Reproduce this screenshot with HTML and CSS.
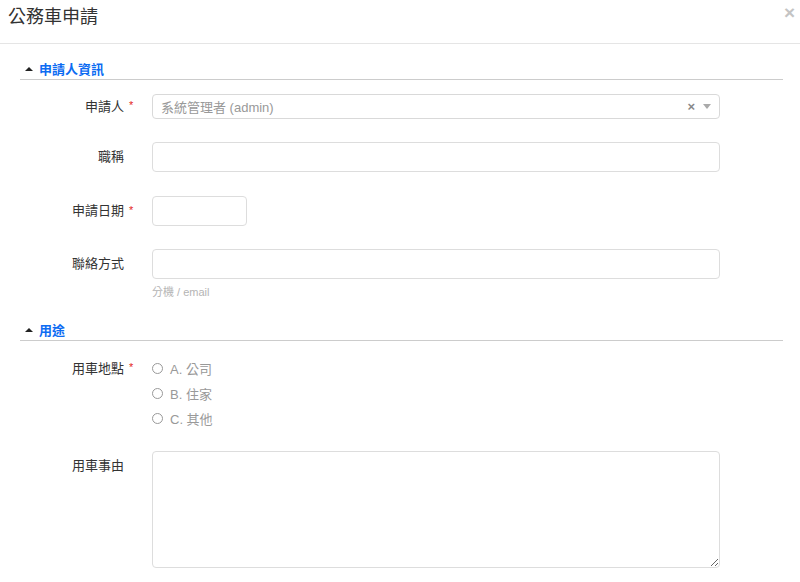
FILE: index.html
```html
<!DOCTYPE html>
<html lang="zh-Hant">
<head>
<meta charset="utf-8">
<title>公務車申請</title>
<link rel="stylesheet" href="styles.css">
</head>
<body>
<div class="modal">
  <div class="modal-header">
    <h1 class="modal-title">公務車申請</h1>
    <span class="close">×</span>
  </div>
  <div class="modal-body">
    <div class="section-title"><span class="caret"></span>申請人資訊</div>
    <div class="form-group">
      <label class="control-label label-sm">申請人<span class="req">*</span></label>
      <div class="control">
        <div class="select">
          <span class="select-value">系統管理者 (admin)</span>
          <span class="select-clear">×</span>
          <span class="select-arrow"></span>
        </div>
      </div>
    </div>
    <div class="form-group gap-lg">
      <label class="control-label">職稱</label>
      <div class="control"><input class="input" type="text"></div>
    </div>
    <div class="form-group">
      <label class="control-label">申請日期<span class="req">*</span></label>
      <div class="control"><input class="input input-date" type="text"></div>
    </div>
    <div class="form-group gap-sm">
      <label class="control-label">聯絡方式</label>
      <div class="control">
        <input class="input" type="text">
        <div class="help">分機 / email</div>
      </div>
    </div>
    <div class="section-title section-2"><span class="caret"></span>用途</div>
    <div class="form-group group-radio">
      <label class="control-label label-sm">用車地點<span class="req">*</span></label>
      <div class="control radios">
        <label class="radio"><span class="circle"></span>A. 公司</label>
        <label class="radio"><span class="circle"></span>B. 住家</label>
        <label class="radio"><span class="circle"></span>C. 其他</label>
      </div>
    </div>
    <div class="form-group">
      <label class="control-label">用車事由</label>
      <div class="control"><textarea class="input textarea"></textarea></div>
    </div>
  </div>
</div>
</body>
</html>
```
FILE: styles.css
```css
* { box-sizing: border-box; }
html, body {
  margin: 0;
  padding: 0;
  background: #fff;
  font-family: "Liberation Sans", "Noto Sans CJK TC", sans-serif;
  color: #333;
  overflow: hidden;
}
.modal { position: relative; width: 800px; }
.modal-header {
  height: 44px;
  padding: 4px 8px 0;
  border-bottom: 1px solid #e5e5e5;
}
.modal-title {
  margin: 0;
  font-size: 18px;
  line-height: 26px;
  font-weight: normal;
  color: #333;
}
.close {
  position: absolute;
  top: 2px;
  right: 5px;
  font-size: 19px;
  font-weight: bold;
  color: #c4c4c4;
  line-height: 22px;
}
.modal-body {
  padding: 15px 17px 0 20px;
}
.section-title {
  display: flex;
  align-items: center;
  height: 21px;
  padding-bottom: 1px;
  border-bottom: 1px solid #ccc;
  font-size: 13px;
  font-weight: bold;
  color: #0d6cf2;
  margin-bottom: 14px;
}
.section-2 { margin-top: 0; margin-bottom: 15px; }
.caret {
  width: 0;
  height: 0;
  margin: 0 6px 0 5px;
  border-left: 4px solid transparent;
  border-right: 4px solid transparent;
  border-bottom: 4px solid #222;
}
.form-group {
  display: grid;
  grid-template-columns: 132px 568px;
  margin-bottom: 23px;
}
.gap-lg { margin-bottom: 24px; }
.gap-sm { margin-bottom: 20px; }
.control-label {
  position: relative;
  text-align: right;
  padding-right: 28px;
  font-size: 13px;
  line-height: 30px;
  color: #333;
}
.label-sm { line-height: 25px; }
.req {
  position: absolute;
  left: 109px;
  top: -1px;
  color: #e4261a;
  font-size: 11px;
}
.control { font-size: 13px; }
.input {
  display: block;
  width: 568px;
  height: 30px;
  border: 1px solid #ddd;
  border-radius: 4px;
  background: #fff;
  font: inherit;
  margin: 0;
}
.input-date { width: 95px; }
.textarea { height: 117px; resize: vertical; }
.select {
  display: flex;
  align-items: center;
  width: 568px;
  height: 25px;
  border: 1px solid #d9d9d9;
  border-radius: 4px;
  padding: 0 8px;
}
.select-value { flex: 1; color: #999; }
.select-clear {
  color: #888;
  font-size: 13px;
  font-weight: bold;
  margin-right: 8px;
}
.select-arrow {
  width: 0;
  height: 0;
  border-left: 4px solid transparent;
  border-right: 4px solid transparent;
  border-top: 5px solid #aaa;
}
.help {
  margin-top: 5px;
  font-size: 11px;
  line-height: 16px;
  color: #b4b4b4;
}
.group-radio { margin-bottom: 20px; }
.radios { display: flex; flex-direction: column; }
.radio {
  display: flex;
  align-items: center;
  height: 25px;
  color: #999;
  font-size: 13px;
}
.circle {
  width: 11px;
  height: 11px;
  border: 1px solid #999;
  border-radius: 50%;
  margin-right: 7px;
}
```
